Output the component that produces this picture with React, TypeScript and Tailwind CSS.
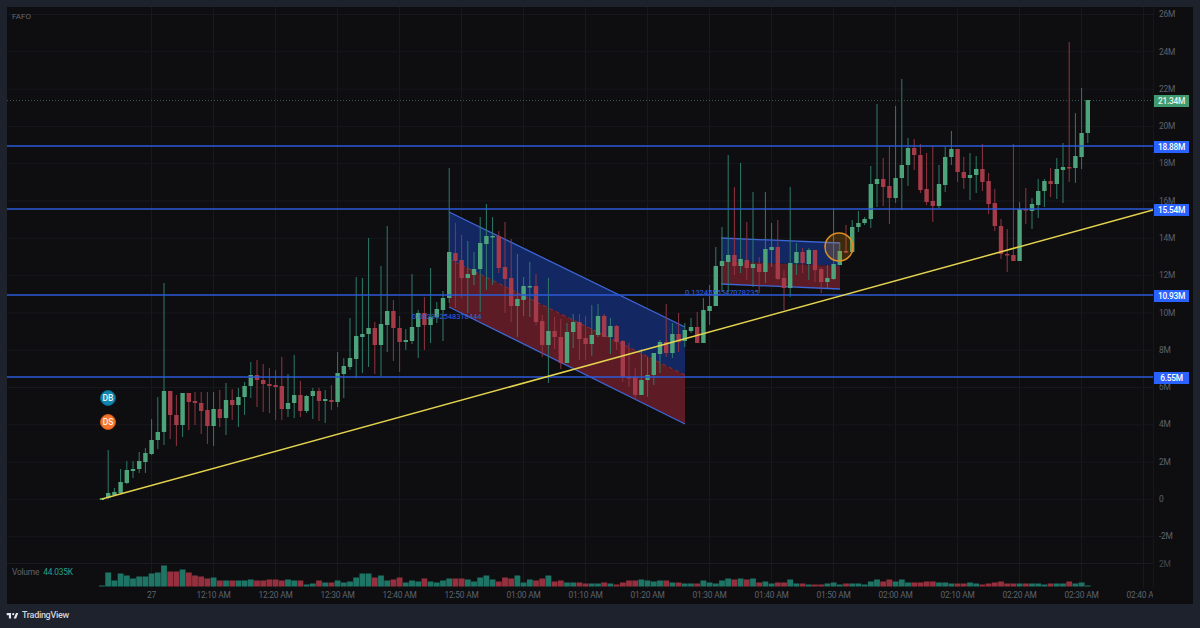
// pixel-traced candles: [wick top, body top, body bottom, wick bottom, up, volume height]
type Candle = [number, number, number, number, number, number];

const candles: Candle[] = [
  [498, 498, 500, 500, 1, 1], [450, 493, 498, 499, 1, 14], [488, 492, 495, 496, 1, 6], [469, 482, 493, 494, 1, 13],
  [461, 470, 483, 484, 1, 11], [461, 469, 471, 478, 1, 8], [452, 461, 469, 473, 1, 10], [448, 453, 462, 473, 1, 10],
  [419, 440, 454, 455, 1, 13], [397, 432, 440, 449, 1, 14], [283, 391, 432, 445, 1, 21], [391, 391, 415, 439, 0, 15],
  [395, 415, 425, 446, 0, 15], [393, 393, 425, 437, 1, 17], [393, 393, 402, 430, 0, 14], [392, 401, 403, 425, 0, 11],
  [392, 403, 411, 434, 0, 10], [392, 410, 426, 444, 0, 8], [392, 409, 426, 446, 1, 9], [390, 409, 418, 427, 0, 6],
  [383, 400, 418, 435, 1, 6], [389, 400, 405, 420, 0, 6], [388, 397, 405, 427, 1, 6], [382, 386, 397, 415, 1, 6],
  [362, 375, 386, 398, 1, 7], [360, 375, 380, 407, 0, 6], [364, 380, 384, 412, 0, 6], [368, 384, 386, 413, 0, 7],
  [370, 385, 387, 420, 0, 7], [357, 386, 409, 420, 0, 6], [374, 403, 409, 417, 1, 7], [355, 395, 403, 418, 1, 6],
  [381, 395, 411, 417, 0, 6], [395, 396, 411, 413, 1, 2], [388, 391, 396, 419, 1, 3], [388, 391, 401, 421, 0, 6],
  [390, 399, 401, 423, 1, 4], [385, 400, 402, 410, 0, 4], [352, 373, 402, 407, 1, 6], [358, 366, 374, 398, 1, 4],
  [318, 358, 367, 370, 1, 5], [277, 336, 359, 378, 1, 9], [278, 334, 337, 373, 1, 13], [238, 328, 334, 367, 1, 13],
  [322, 328, 345, 374, 0, 9], [266, 324, 345, 376, 1, 11], [226, 311, 325, 352, 1, 6], [300, 311, 328, 361, 0, 7],
  [316, 328, 342, 372, 0, 9], [329, 340, 342, 350, 1, 4], [274, 327, 341, 344, 1, 6], [310, 313, 327, 358, 1, 5],
  [297, 313, 325, 350, 0, 8], [268, 317, 325, 343, 1, 5], [302, 309, 317, 323, 1, 4], [291, 298, 310, 341, 1, 6],
  [168, 252, 298, 303, 1, 8], [223, 253, 261, 308, 0, 8], [235, 260, 278, 298, 0, 8], [241, 274, 278, 313, 1, 7],
  [252, 269, 275, 285, 1, 5], [217, 243, 269, 312, 1, 9], [204, 236, 244, 290, 1, 11], [217, 236, 237, 285, 1, 7],
  [231, 236, 268, 273, 0, 5], [222, 267, 279, 313, 0, 9], [239, 278, 306, 322, 0, 8], [254, 299, 306, 337, 1, 11],
  [277, 286, 300, 316, 1, 4], [262, 286, 287, 317, 1, 7], [274, 286, 322, 325, 0, 6], [315, 321, 345, 357, 0, 8],
  [278, 331, 345, 383, 1, 11], [317, 331, 337, 349, 0, 5], [319, 337, 363, 369, 0, 6], [323, 332, 363, 363, 1, 4],
  [314, 322, 332, 348, 1, 4], [314, 322, 339, 360, 0, 4], [316, 338, 344, 360, 0, 3], [305, 335, 344, 356, 1, 3],
  [304, 316, 335, 337, 1, 3], [314, 316, 337, 336, 0, 4], [318, 326, 337, 354, 1, 3], [325, 326, 342, 350, 0, 2],
  [340, 341, 377, 382, 0, 4], [343, 377, 378, 387, 0, 6], [368, 377, 395, 400, 0, 6], [349, 380, 395, 395, 1, 7],
  [357, 375, 380, 397, 1, 6], [353, 353, 375, 385, 1, 5], [340, 342, 354, 373, 1, 6], [304, 342, 353, 357, 0, 6],
  [323, 334, 353, 358, 1, 4], [313, 334, 342, 352, 0, 4], [323, 330, 341, 347, 1, 3], [318, 327, 331, 333, 1, 3],
  [312, 327, 343, 343, 0, 3], [298, 310, 343, 343, 1, 6], [285, 306, 311, 325, 1, 4], [247, 266, 306, 306, 1, 3],
  [227, 261, 266, 290, 1, 6], [155, 255, 262, 292, 1, 8], [187, 255, 266, 275, 0, 7], [163, 259, 266, 273, 1, 8],
  [222, 260, 268, 280, 0, 7], [192, 264, 268, 287, 1, 8], [257, 264, 272, 293, 0, 4], [192, 249, 272, 283, 1, 5],
  [223, 247, 250, 267, 1, 3], [220, 247, 279, 280, 0, 4], [270, 278, 288, 310, 0, 4], [187, 263, 288, 297, 1, 7],
  [243, 252, 263, 275, 1, 3], [248, 252, 263, 273, 0, 3], [248, 250, 264, 280, 1, 2], [250, 250, 270, 282, 0, 2],
  [267, 269, 282, 293, 0, 2], [265, 278, 282, 288, 1, 3], [208, 264, 279, 280, 1, 4], [243, 251, 265, 265, 1, 2],
  [225, 251, 252, 253, 0, 3], [220, 227, 252, 253, 1, 3], [211, 223, 227, 232, 1, 3], [217, 219, 223, 225, 1, 2],
  [166, 184, 219, 228, 1, 5], [104, 179, 184, 207, 1, 7], [158, 179, 187, 206, 0, 5], [146, 186, 198, 224, 0, 7],
  [106, 178, 198, 203, 1, 5], [79, 165, 178, 210, 1, 7], [138, 148, 165, 186, 1, 4], [139, 148, 155, 170, 0, 4],
  [144, 155, 190, 193, 0, 4], [153, 189, 202, 205, 0, 5], [146, 201, 206, 222, 0, 5], [165, 184, 206, 208, 1, 4],
  [147, 157, 185, 192, 1, 4], [131, 149, 157, 165, 1, 3], [149, 149, 172, 182, 0, 3], [157, 172, 178, 189, 0, 3],
  [153, 175, 178, 200, 1, 4], [156, 169, 175, 193, 1, 3], [144, 169, 182, 191, 0, 2], [173, 181, 204, 214, 0, 3],
  [189, 203, 226, 231, 0, 4], [219, 226, 254, 259, 0, 5], [229, 254, 255, 272, 0, 3], [144, 255, 261, 261, 0, 3],
  [202, 209, 261, 261, 1, 3], [188, 209, 210, 224, 0, 3], [198, 204, 211, 229, 1, 3], [179, 191, 205, 218, 1, 3],
  [179, 181, 191, 207, 1, 2], [168, 181, 184, 197, 0, 3], [158, 169, 184, 199, 1, 3], [143, 167, 170, 203, 1, 3],
  [42, 167, 168, 182, 0, 5], [113, 156, 168, 183, 1, 3], [88, 133, 157, 169, 1, 4], [100, 100, 133, 143, 1, 1],
];

const candleX = (i: number) => 102 + i * 6.2;

const priceTicks = ['26M', '24M', '22M', '20M', '18M', '16M', '14M', '12M', '10M', '8M', '6M', '4M', '2M', '0', '-2M'];
const timeTicks = ['27', '12:10 AM', '12:20 AM', '12:30 AM', '12:40 AM', '12:50 AM', '01:00 AM', '01:10 AM', '01:20 AM', '01:30 AM', '01:40 AM', '01:50 AM', '02:00 AM', '02:10 AM', '02:20 AM', '02:30 AM', '02:40 AM'];

const gridX = timeTicks.map((_, i) => 151.5 + i * 62);
const gridY = priceTicks.map((_, i) => 14.5 + i * 37.3);
const levels = [146, 209, 295, 377];

function Chart() {
  return (
    <svg width="1146" height="581" viewBox="7 7 1146 581" className="block">
      {gridX.map((x) => (
        <line key={x} x1={x} x2={x} y1="7" y2="588" stroke="#18191d" strokeWidth="1" />
      ))}
      {gridY.map((y) => (
        <line key={y} x1="7" x2="1153" y1={y} y2={y} stroke="#17181c" strokeWidth="1" />
      ))}
      <line x1="7" x2="1153" y1="563.5" y2="563.5" stroke="#1a1b1f" strokeWidth="1" />

      {/* falling channel */}
      <polygon points="449,212 685,327 685,375 449,259" fill="#14296a" fillOpacity="0.92" />
      <polygon points="449,259 685,375 685,424 449,307" fill="#5c1b25" />
      <line x1="449" y1="259" x2="685" y2="375" stroke="#8a2f3c" strokeWidth="1" strokeDasharray="4 3" />
      <line x1="449" y1="212" x2="685" y2="327" stroke="#3d66d6" strokeWidth="1.3" />
      <line x1="449" y1="307" x2="685" y2="424" stroke="#3d66d6" strokeWidth="1.3" />

      {/* flag channel */}
      <polygon points="721,238 840,243 840,266 721,261" fill="#14296a" fillOpacity="0.92" />
      <polygon points="721,261 840,266 840,289 721,284" fill="#5c1b25" />
      <line x1="721" y1="238" x2="840" y2="243" stroke="#3d66d6" strokeWidth="1.3" />
      <line x1="721" y1="284" x2="840" y2="289" stroke="#3d66d6" strokeWidth="1.3" />

      {/* current price line */}
      <line x1="7" x2="1153" y1="100.5" y2="100.5" stroke="#345a4b" strokeWidth="1" strokeDasharray="1 2" />

      {candles.map(([hi, top, bottom, lo, up, vol], i) => {
        const x = candleX(i);
        return (
          <g key={i}>
            <line x1={x} x2={x} y1={hi} y2={lo} stroke={up ? '#2e7a68' : '#8f3542'} strokeWidth="1" />
            <rect x={x - 2.2} y={top} width="4.4" height={Math.max(bottom - top, 1.5)} fill={up ? '#4ea47a' : '#a53b49'} />
            <rect x={x - 2.9} y={586.5 - vol} width="5.8" height={vol} fill={up ? '#1f7565' : '#96303f'} />
          </g>
        );
      })}

      {levels.map((y) => (
        <line key={y} x1="7" x2="1153" y1={y} y2={y} stroke="#2c5bd9" strokeWidth="1.4" />
      ))}

      <line x1="102" y1="499" x2="1153" y2="210" stroke="#e3d34e" strokeWidth="1.5" />

      <circle cx="839" cy="247" r="14" fill="#ff9800" fillOpacity="0.2" stroke="#dd8f22" strokeWidth="1.5" />
    </svg>
  );
}

function TvLogo() {
  return (
    <svg width="13" height="7.5" viewBox="0 4 36 19" fill="#e4e6eb" className="-ml-px">
      <path d="M14 6H2v6h6v9h6V6zm14 15h-6.9l6.6-15H34l-6 15z" />
      <circle cx="20" cy="9" r="3" />
    </svg>
  );
}

export default function App() {
  return (
    <div className="flex h-[628px] w-[1200px] flex-col bg-[#1e222d] px-[7px] pt-[7px] font-['Roboto',sans-serif]">
      <div className="relative flex h-[597px] w-[1186px] flex-col overflow-hidden bg-[#0e0e11]">
        <div className="flex h-[581px]">
          <div className="relative w-[1146px] overflow-hidden">
            <Chart />
            <span className="absolute left-[5px] top-[5px] text-[8px] leading-[9px] text-[#64666e]">FAFO</span>
            <div className="absolute left-[5px] top-[560px] flex gap-[4px] text-[8.4px] leading-[11px] tracking-[-0.2px]">
              <span className="text-[#5f626a]">Volume</span>
              <span className="text-[#22a08a]">44.035K</span>
            </div>
            <span className="absolute left-[405px] top-[305px] text-[7.5px] leading-[10px] text-[#2f62e6]">0.083842548318444</span>
            <span className="absolute left-[678px] top-[281px] text-[7.5px] leading-[10px] text-[#2f62e6]">0.1324555547078235</span>
            <div className="absolute left-[93px] top-[383px] flex h-4 w-4 items-center justify-center rounded-full border border-[#0c5f7f] bg-[#0f86b0] text-[8.5px] font-medium text-[#e6f4fa]">DB</div>
            <div className="absolute left-[93px] top-[407px] flex h-4 w-4 items-center justify-center rounded-full border border-[#c9581a] bg-[#f5752a] text-[8.5px] font-medium text-[#fdeee4]">DS</div>
          </div>
          <div className="relative w-[40px] border-l border-[#16171b] pl-[5px] text-[8.4px] tracking-[-0.25px] text-[#5f626a]">
            <div className="-mt-[10.8px] flex flex-col">
              {priceTicks.map((tick) => (
                <span key={tick} className="h-[37.3px] leading-[37.3px]">{tick}</span>
              ))}
              <span className="-mt-[10px] leading-[37.3px] text-[#45474e]">2M</span>
            </div>
            <div className="absolute left-0 top-[88px] h-[12px] w-[35px] bg-[#3f9b6f] text-center text-[8.4px] font-medium leading-[12px] tracking-[-0.3px] text-[#e8f4ee]">21.34M</div>
            <div className="absolute left-0 top-[134px] h-[12px] w-[35px] bg-[#2962ff] text-center text-[8.4px] font-medium leading-[12px] tracking-[-0.3px] text-white">18.88M</div>
            <div className="absolute left-0 top-[197px] h-[12px] w-[35px] bg-[#2962ff] text-center text-[8.4px] font-medium leading-[12px] tracking-[-0.3px] text-white">15.54M</div>
            <div className="absolute left-0 top-[283px] h-[12px] w-[35px] bg-[#2962ff] text-center text-[8.4px] font-medium leading-[12px] tracking-[-0.3px] text-white">10.93M</div>
            <div className="absolute left-0 top-[365px] h-[12px] w-[35px] bg-[#2962ff] text-center text-[8.4px] font-medium leading-[12px] tracking-[-0.3px] text-white">6.55M</div>
          </div>
        </div>
        <div className="flex h-[16px] w-[1146px] overflow-hidden pl-[113.5px] text-[8.4px] leading-[14px] tracking-[-0.2px] text-[#5f626a]">
          {timeTicks.map((tick) => (
            <span key={tick} className="w-[62px] shrink-0 whitespace-nowrap text-center">{tick}</span>
          ))}
        </div>
      </div>
      <div className="flex h-[24px] items-center gap-[3px]">
        <TvLogo />
        <span className="text-[9px] font-medium tracking-[-0.3px] text-[#d1d4dc]">TradingView</span>
      </div>
    </div>
  );
}
